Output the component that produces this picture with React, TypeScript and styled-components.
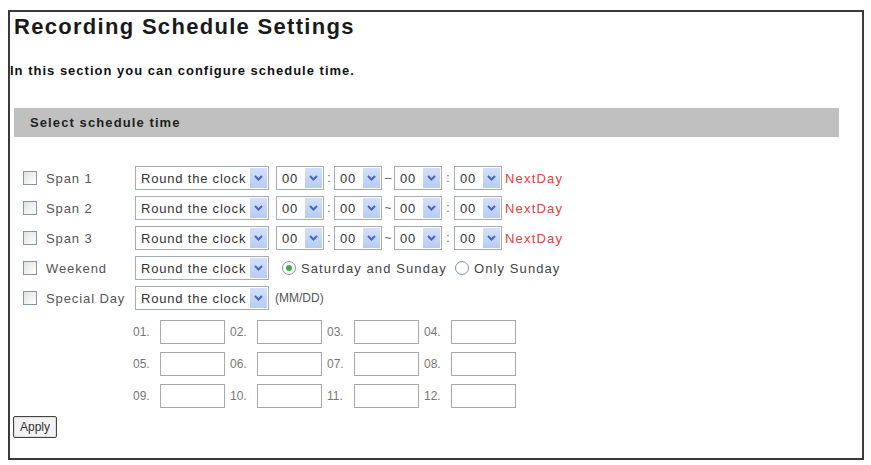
import styled, { createGlobalStyle } from 'styled-components'

const GlobalStyle = createGlobalStyle`
  html, body {
    margin: 0;
    padding: 0;
    background: #ffffff;
  }
  body {
    font-family: "Liberation Sans", Arial, sans-serif;
  }
`

const spans = ['Span 1', 'Span 2', 'Span 3']
const dateLabels = ['01.', '02.', '03.', '04.', '05.', '06.', '07.', '08.', '09.', '10.', '11.', '12.']

function Chevron() {
  return (
    <svg width="9" height="6" viewBox="0 0 9 6">
      <path d="M1 1 L4.5 4.5 L8 1" fill="none" stroke="#4466c4" strokeWidth="2" />
    </svg>
  )
}

function Dropdown({ width, value }: { width: number; value: string }) {
  return (
    <SelectBox $width={width}>
      <SelectText>{value}</SelectText>
      <SelectButton>
        <Chevron />
      </SelectButton>
    </SelectBox>
  )
}

function Radio({ checked }: { checked?: boolean }) {
  return <RadioCircle>{checked && <RadioDot />}</RadioCircle>
}

export default function App() {
  return (
    <>
      <GlobalStyle />
      <Frame>
        <Title>Recording Schedule Settings</Title>
        <Intro>In this section you can configure schedule time.</Intro>
        <SectionBar>Select schedule time</SectionBar>
        <Rows>
          {spans.map((s, i) => (
            <Row key={s}>
              <CheckCell>
                <CheckBox />
                <RowLabel>{s}</RowLabel>
              </CheckCell>
              <Dropdown width={134} value="Round the clock" />
              <Sep $width={7} />
              <Dropdown width={48} value="00" />
              <Sep $width={10}>:</Sep>
              <Dropdown width={48} value="00" />
              <Sep $width={12}>{i === 0 ? '–' : '~'}</Sep>
              <Dropdown width={48} value="00" />
              <Sep $width={12}>:</Sep>
              <Dropdown width={48} value="00" />
              <NextDay>NextDay</NextDay>
            </Row>
          ))}
          <Row>
            <CheckCell>
              <CheckBox />
              <RowLabel>Weekend</RowLabel>
            </CheckCell>
            <Dropdown width={134} value="Round the clock" />
            <RadioOption>
              <Radio checked />
              <OptionText>Saturday and Sunday</OptionText>
            </RadioOption>
            <RadioOption>
              <Radio />
              <OptionText>Only Sunday</OptionText>
            </RadioOption>
          </Row>
          <Row>
            <CheckCell>
              <CheckBox />
              <RowLabel>Special Day</RowLabel>
            </CheckCell>
            <Dropdown width={134} value="Round the clock" />
            <Hint>(MM/DD)</Hint>
          </Row>
        </Rows>
        <DateGrid>
          {dateLabels.map((d) => (
            <DateCell key={d}>
              <DateLabel>{d}</DateLabel>
              <DateInput />
            </DateCell>
          ))}
        </DateGrid>
        <ApplyButton>Apply</ApplyButton>
      </Frame>
    </>
  )
}

const Frame = styled.div`
  box-sizing: border-box;
  margin: 10px 7px 0 8px;
  width: 856px;
  height: 450px;
  border: 2px solid #3a3a3a;
  padding: 2px 23px 0 4px;
  background: #fff;
`

const Title = styled.h1`
  margin: 0;
  font-size: 22px;
  line-height: 26px;
  font-weight: 700;
  letter-spacing: 1.3px;
  color: #1a1a1a;
`

const Intro = styled.p`
  margin: 23px 0 0 -4px;
  font-size: 13px;
  line-height: 16px;
  font-weight: 700;
  letter-spacing: 1px;
  color: #111;
`

const SectionBar = styled.div`
  margin-top: 29px;
  height: 29px;
  display: flex;
  align-items: center;
  padding-left: 16px;
  background: #c0c0c0;
  font-size: 13px;
  font-weight: 700;
  letter-spacing: 1.1px;
  color: #222;
`

const Rows = styled.div`
  margin-top: 29px;
  padding-left: 9px;
  display: flex;
  flex-direction: column;
  gap: 6px;
`

const Row = styled.div`
  display: flex;
  align-items: center;
  height: 24px;
`

const CheckCell = styled.div`
  width: 112px;
  display: flex;
  align-items: center;
  gap: 9px;
`

const CheckBox = styled.span`
  box-sizing: border-box;
  width: 14px;
  height: 14px;
  border: 1px solid #8596a6;
  background: linear-gradient(135deg, #e2e2dc, #ffffff);
`

const RowLabel = styled.span`
  font-size: 13px;
  letter-spacing: 0.9px;
  color: #555;
  white-space: nowrap;
`

const SelectBox = styled.div<{ $width: number }>`
  box-sizing: border-box;
  width: ${(p) => p.$width}px;
  height: 24px;
  border: 1px solid #a5acb5;
  background: #fff;
  display: flex;
  align-items: stretch;
  padding: 1px;
`

const SelectText = styled.span`
  flex: 1;
  display: flex;
  align-items: center;
  padding-left: 4px;
  font-size: 13px;
  letter-spacing: 0.8px;
  color: #333;
  white-space: nowrap;
  overflow: hidden;
`

const SelectButton = styled.span`
  width: 17px;
  flex: none;
  display: flex;
  align-items: center;
  justify-content: center;
  background: linear-gradient(#d4e0fa, #b9cbf3);
`

const Sep = styled.span<{ $width: number }>`
  width: ${(p) => p.$width}px;
  text-align: center;
  font-size: 12px;
  color: #666;
`

const NextDay = styled.span`
  margin-left: 3px;
  font-size: 13px;
  letter-spacing: 1.2px;
  color: #e0403e;
`

const RadioOption = styled.label`
  display: flex;
  align-items: center;
  gap: 5px;
  margin-left: 13px;
  &:last-child {
    margin-left: 8px;
  }
`

const RadioCircle = styled.span`
  box-sizing: border-box;
  width: 14px;
  height: 14px;
  border-radius: 50%;
  border: 1px solid #8596a6;
  background: #fdfdfd;
  display: flex;
  align-items: center;
  justify-content: center;
`

const RadioDot = styled.span`
  width: 6px;
  height: 6px;
  border-radius: 50%;
  background: #3fae3f;
`

const OptionText = styled.span`
  font-size: 13px;
  letter-spacing: 1.1px;
  color: #444;
  white-space: nowrap;
`

const Hint = styled.span`
  margin-left: 6px;
  font-size: 12px;
  color: #555;
`

const DateGrid = styled.div`
  margin: 10px 0 0 119px;
  display: grid;
  grid-template-columns: repeat(4, 92px);
  column-gap: 5px;
  row-gap: 8px;
  width: max-content;
`

const DateCell = styled.div`
  display: flex;
  align-items: center;
`

const DateLabel = styled.span`
  width: 27px;
  font-size: 12px;
  color: #777;
`

const DateInput = styled.span`
  box-sizing: border-box;
  width: 65px;
  height: 24px;
  border: 1px solid #a9a9a9;
  background: #fff;
`

const ApplyButton = styled.button`
  margin: 8px 0 0 -1px;
  width: 44px;
  height: 22px;
  padding: 0;
  border: 1px solid #444;
  border-radius: 2px;
  background: #f2f2f2;
  box-shadow: inset 0 0 0 1px #ddd;
  font-family: "Liberation Sans", Arial, sans-serif;
  font-size: 12px;
  color: #333;
`
